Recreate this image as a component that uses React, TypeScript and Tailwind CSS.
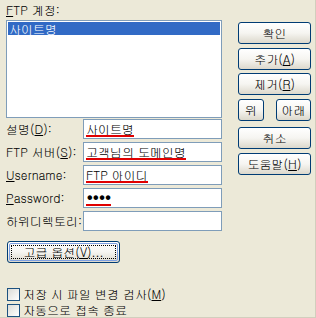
const inputBox = 'h-[20px] w-[139px] bg-white border border-[#7F9DB9] pl-[2px] flex items-center';
const xpButton =
  'h-[22px] flex items-center justify-center rounded-[3px] border border-[#003C74] bg-linear-to-b from-white via-[#F6F5F1] to-[#DCD8CC] text-black';

function Key({ children }: { children: string }) {
  return <span className="underline underline-offset-[1px]">{children}</span>;
}

function Marked({ children, className = '' }: { children: React.ReactNode; className?: string }) {
  return (
    <span className={`inline-block leading-[13px] border-b-2 border-[#E00000] ${className}`}>{children}</span>
  );
}

function Row({ label, children }: { label: React.ReactNode; children?: React.ReactNode }) {
  return (
    <div className="flex items-center h-[20px]">
      <div className="w-[77px] whitespace-nowrap">{label}</div>
      <div className={inputBox}>{children}</div>
    </div>
  );
}

function Check({ label }: { label: React.ReactNode }) {
  return (
    <div className="flex items-center h-[16px]">
      <div className="w-[13px] h-[13px] border border-[#1C5180] bg-linear-to-br from-[#DCDCD7] to-white" />
      <span className="ml-[3px] whitespace-nowrap">{label}</span>
    </div>
  );
}

export default function App() {
  return (
    <div className="w-[316px] h-[318px] overflow-hidden bg-[#ECE9D8] text-[12px] leading-[14px] text-black font-['Gulim','Noto_Sans_CJK_KR',sans-serif] pl-[6px] pt-[3px] border-b border-r border-[#D2CEBD]">
      <div className="flex">
        <div className="w-[216px]">
          <div className="h-[17px]">
            <Key>F</Key>TP 계정:
          </div>
          <div className="h-[98px] bg-white border border-[#7F9DB9] p-[1px]">
            <div className="h-[13px] bg-[#316AC5] text-white leading-[13px] pl-[1px]">사이트명</div>
          </div>
          <div className="mt-[1px] flex flex-col gap-[3px]">
            <Row label={<>설명(<Key>D</Key>):</>}>
              <Marked>사이트명</Marked>
            </Row>
            <Row label={<>FTP 서버(<Key>S</Key>):</>}>
              <Marked>고객님의 도메인명</Marked>
            </Row>
            <Row label={<><Key>U</Key>sername:</>}>
              <Marked>FTP 아이디</Marked>
            </Row>
            <Row label={<><Key>P</Key>assword:</>}>
              <Marked className="font-['Liberation_Sans',sans-serif] text-[16px] font-bold tracking-[0.5px] pl-[1px] leading-[12px]">
                ••••
              </Marked>
            </Row>
            <Row label="하위디렉토리:" />
          </div>
        </div>

        <div className="ml-[16px] w-[73px] pt-[19px] flex flex-col">
          <button className={xpButton}>확인</button>
          <button className={`${xpButton} mt-[4px]`}>
            추가(<Key>A</Key>)
          </button>
          <button className={`${xpButton} mt-[3px]`}>
            제거(<Key>R</Key>)
          </button>
          <div className="mt-[4px] flex justify-between">
            <button className={`${xpButton} w-[26px] h-[21px]`}>위</button>
            <button className={`${xpButton} w-[35px] h-[21px]`}>아래</button>
          </div>
          <button className={`${xpButton} mt-[6px]`}>취소</button>
          <button className={`${xpButton} mt-[4px]`}>
            도움말(<Key>H</Key>)
          </button>
        </div>
      </div>

      <div className="mt-[10px] ml-[1px] w-[113px] h-[22px] rounded-[3px] border border-[#003C74] bg-linear-to-b from-white via-[#F6F5F1] to-[#DCD8CC] p-[1px]">
        <div className="h-full rounded-[2px] border border-[#7D9FE2] p-[1px]">
          <div className="h-full border border-dotted border-black flex items-center justify-center">
            고급 옵션(<Key>V</Key>)...
          </div>
        </div>
      </div>

      <div className="mt-[23px] ml-[1px] flex flex-col">
        <Check label={<>저장 시 파일 변경 검사(<Key>M</Key>)</>} />
        <Check label="자동으로 접속 종료" />
      </div>
    </div>
  );
}
